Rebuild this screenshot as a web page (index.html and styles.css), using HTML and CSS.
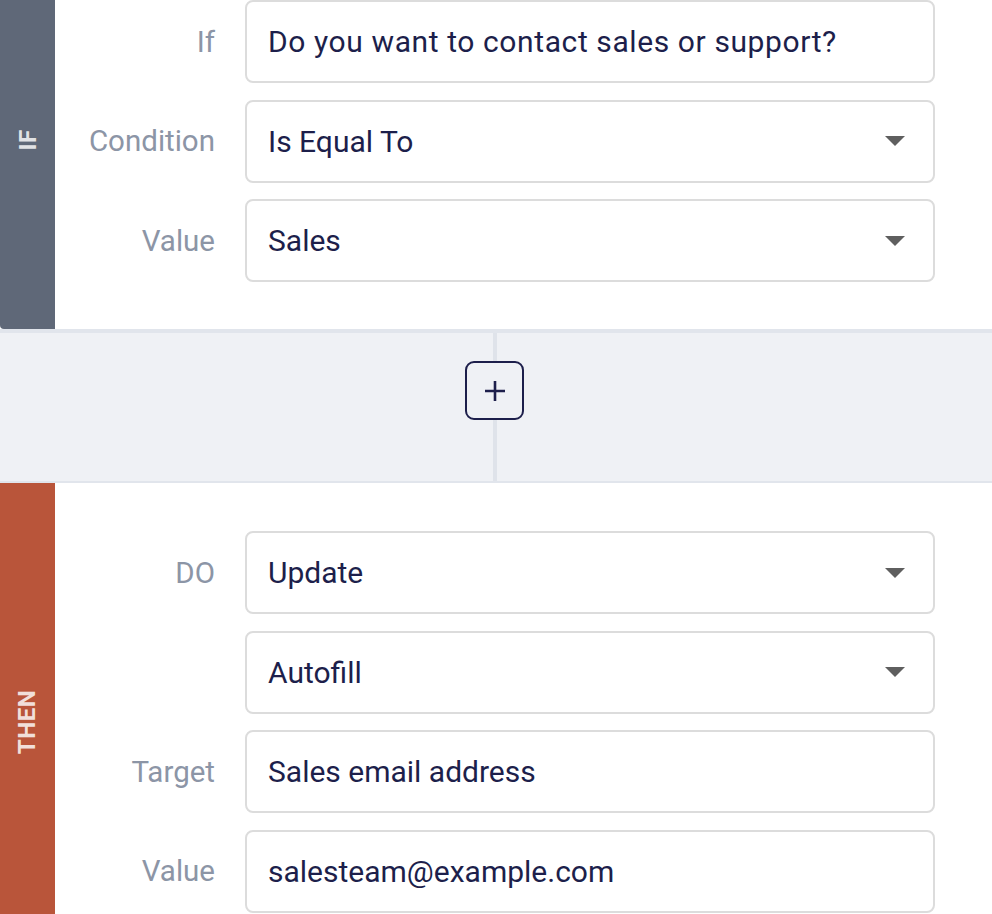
FILE: index.html
```html
<!DOCTYPE html>
<html>
<head>
<meta charset="utf-8">
<link rel="stylesheet" href="styles.css">
</head>
<body>
<div class="page">
  <section class="block block-if">
    <div class="side side-if"><span class="side-label">IF</span></div>
    <div class="fields">
      <div class="row"><div class="label">If</div><div class="field field-question">Do you want to contact sales or support?</div></div>
      <div class="row"><div class="label">Condition</div><div class="field select">Is Equal To<span class="caret"></span></div></div>
      <div class="row"><div class="label">Value</div><div class="field select">Sales<span class="caret"></span></div></div>
    </div>
  </section>
  <div class="connector">
    <button class="add" type="button">
      <svg width="22" height="22" viewBox="0 0 22 22"><path d="M11 1V21M1 11H21" stroke="#1d1f4b" stroke-width="2.6" fill="none"/></svg>
    </button>
  </div>
  <section class="block block-then">
    <div class="side side-then"><span class="side-label">THEN</span></div>
    <div class="fields">
      <div class="row"><div class="label">DO</div><div class="field select">Update<span class="caret"></span></div></div>
      <div class="row"><div class="label"></div><div class="field select">Autofill<span class="caret"></span></div></div>
      <div class="row"><div class="label">Target</div><div class="field">Sales email address</div></div>
      <div class="row"><div class="label">Value</div><div class="field">salesteam@example.com</div></div>
    </div>
  </section>
</div>
</body>
</html>
```
FILE: styles.css
```css
html, body {
  margin: 0;
  padding: 0;
  background: #ffffff;
  overflow: hidden;
}
body {
  font-family: Roboto, "Liberation Sans", Arial, sans-serif;
}
.page {
  margin-top: -50px;
  width: 992px;
}
.block {
  display: flex;
  background: #ffffff;
}
.side {
  width: 55px;
  flex: 0 0 55px;
  display: flex;
  align-items: center;
  justify-content: center;
}
.side-if {
  background: #5f6878;
  border-bottom-left-radius: 4px;
}
.side-then {
  background: #b9553a;
}
.side-label {
  transform: rotate(-90deg);
  color: rgba(255, 255, 255, 0.82);
  font-weight: 700;
  font-size: 24px;
  letter-spacing: 0.5px;
  white-space: nowrap;
  line-height: 1;
}
.block-if .fields {
  padding: 50px 0 47px;
}
.block-then .fields {
  padding: 48px 0 48px;
}
.fields {
  flex: 1;
  display: flex;
  flex-direction: column;
  gap: 16.5px;
}
.row {
  display: flex;
  align-items: center;
  gap: 30px;
}
.label {
  width: 160px;
  text-align: right;
  font-size: 29.5px;
  color: #8c95a6;
}
.field {
  box-sizing: border-box;
  width: 690px;
  height: 83px;
  border: 2px solid #dcdcdc;
  border-radius: 8px;
  padding: 0 21px;
  display: flex;
  align-items: center;
  justify-content: space-between;
  font-size: 30px;
  color: #1d1f4b;
}
.field-question {
  letter-spacing: 0.6px;
}
.caret {
  width: 0;
  height: 0;
  border-left: 10px solid transparent;
  border-right: 10px solid transparent;
  border-top: 10px solid #5f5f5f;
  margin-right: 7px;
}
.connector {
  position: relative;
  height: 120px;
  background: #eff1f5;
  border-top: 4px solid #e1e5ec;
  border-bottom: 2px solid #e1e5ec;
  display: flex;
  justify-content: center;
  align-items: flex-start;
  padding-top: 28px;
}
.connector::before {
  content: "";
  position: absolute;
  top: 0;
  bottom: 0;
  left: 493px;
  width: 4px;
  background: #dfe3ea;
}
.add {
  position: relative;
  box-sizing: border-box;
  width: 59px;
  height: 59px;
  margin-left: -3px;
  border: 2px solid #1d1f4b;
  border-radius: 9px;
  background: #eff1f5;
  display: flex;
  align-items: center;
  justify-content: center;
  padding: 0;
}
.add svg {
  display: block;
}
```
